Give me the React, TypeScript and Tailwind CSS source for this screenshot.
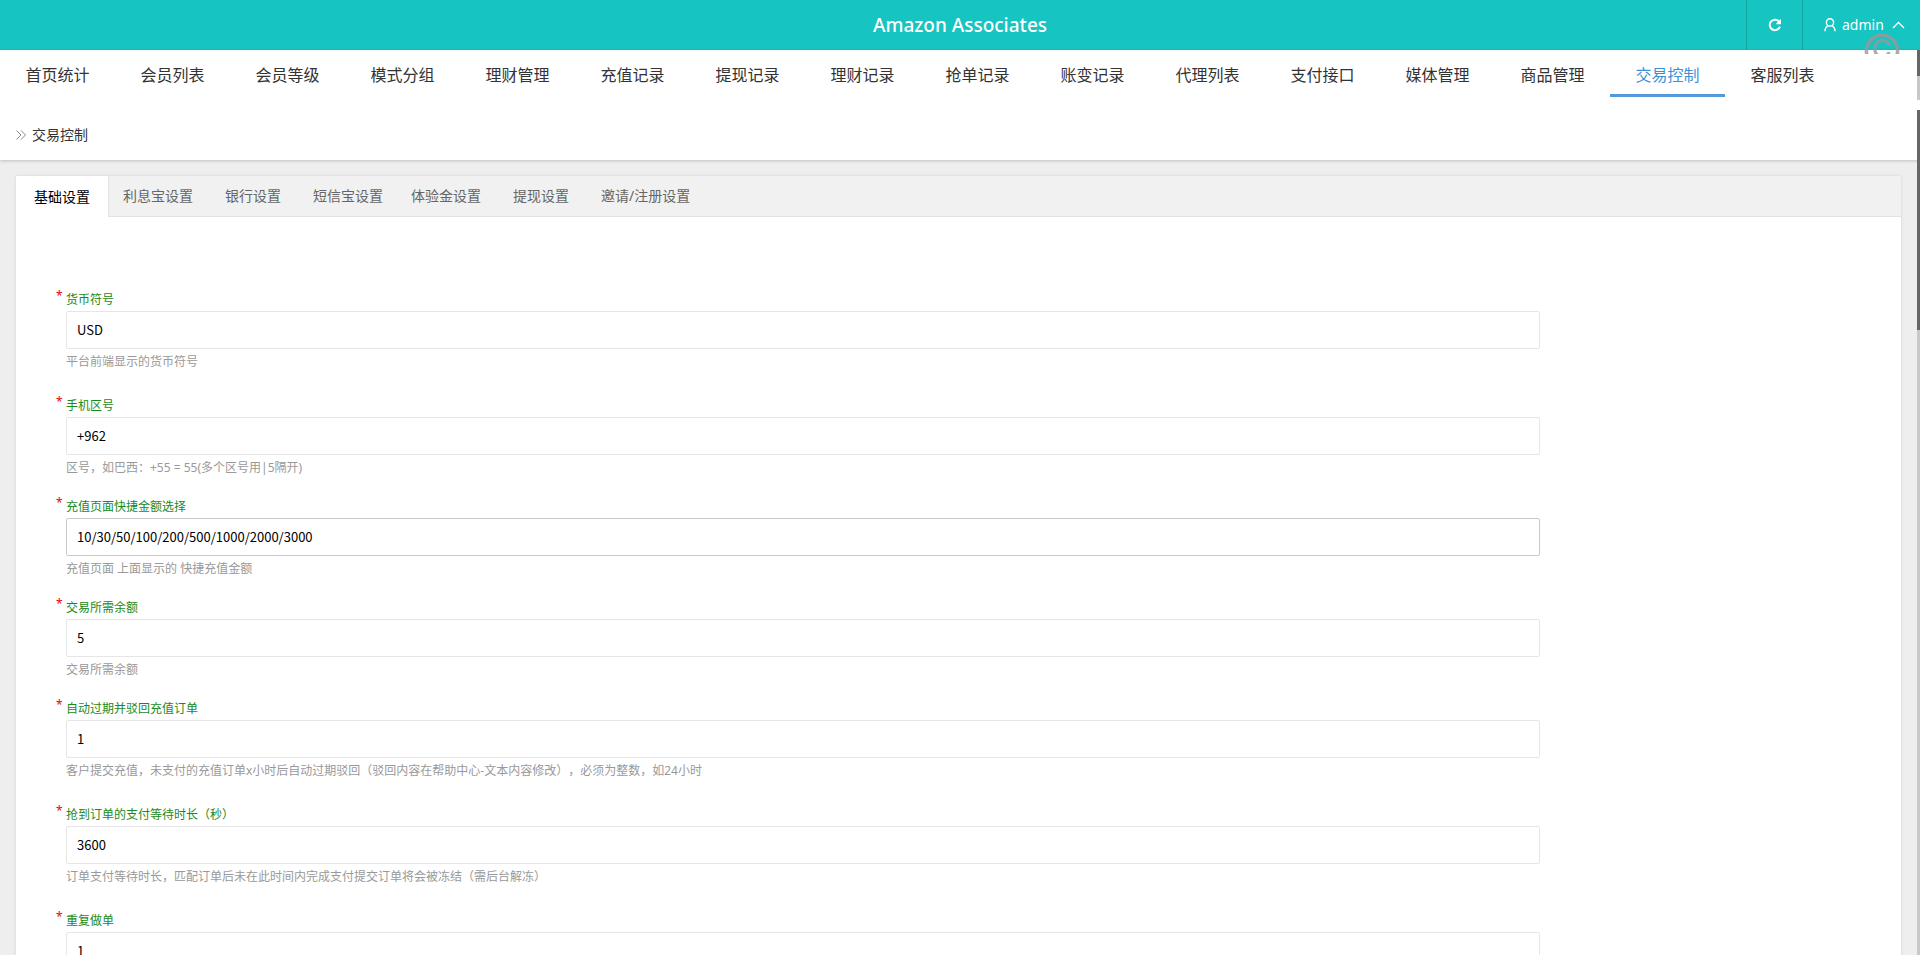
import React, { useState } from 'react';

const navItems = [
  '首页统计',
  '会员列表',
  '会员等级',
  '模式分组',
  '理财管理',
  '充值记录',
  '提现记录',
  '理财记录',
  '抢单记录',
  '账变记录',
  '代理列表',
  '支付接口',
  '媒体管理',
  '商品管理',
  '交易控制',
  '客服列表',
];

const tabs = [
  { name: '利息宝设置', spaced: false },
  { name: '银行设置', spaced: true },
  { name: '短信宝设置', spaced: true },
  { name: '体验金设置', spaced: false },
  { name: '提现设置', spaced: true },
  { name: '邀请/注册设置', spaced: true },
];

interface Field {
  id: string;
  label: string;
  value: string;
  hint: string;
  active?: boolean;
  compact?: boolean;
}

const fields: Field[] = [
  { id: 'currency', label: '货币符号', value: 'USD', hint: '平台前端显示的货币符号' },
  {
    id: 'area_code',
    label: '手机区号',
    value: '+962',
    hint: '区号，如巴西：+55 = 55(多个区号用|5隔开)',
    compact: true,
  },
  {
    id: 'recharge_options',
    label: '充值页面快捷金额选择',
    value: '10/30/50/100/200/500/1000/2000/3000',
    hint: '充值页面 上面显示的 快捷充值金额',
    active: true,
    compact: true,
  },
  { id: 'min_balance', label: '交易所需余额', value: '5', hint: '交易所需余额', compact: true },
  {
    id: 'expire_hours',
    label: '自动过期并驳回充值订单',
    value: '1',
    hint: '客户提交充值，未支付的充值订单x小时后自动过期驳回（驳回内容在帮助中心-文本内容修改），必须为整数，如24小时',
  },
  {
    id: 'pay_timeout',
    label: '抢到订单的支付等待时长（秒）',
    value: '3600',
    hint: '订单支付等待时长，匹配订单后未在此时间内完成支付提交订单将会被冻结（需后台解冻）',
  },
  { id: 'repeat_order', label: '重复做单', value: '1', hint: '' },
];

function Header() {
  return (
    <header className="relative flex h-[50px] shrink-0 items-stretch justify-end bg-[#16c4c1] text-white">
      <h1 className="pointer-events-none absolute inset-x-0 top-0 text-center text-[19px] font-medium leading-[50px]">
        Amazon Associates
      </h1>
      <button
        type="button"
        aria-label="刷新"
        className="flex w-14 items-center justify-center border-l border-[#12a3a1]"
      >
        <svg width="14" height="14" viewBox="0 0 14 14" fill="none">
          <path d="M10.8 3.4A5.2 5.2 0 1 0 11.9 8.6" stroke="currentColor" strokeWidth="2" />
          <path d="M13 0.8V6.2H7.6Z" fill="currentColor" />
        </svg>
      </button>
      <button
        type="button"
        className="flex w-[118px] items-center gap-[6px] border-l border-[#12a3a1] pl-[21px] text-sm"
      >
        <svg width="12" height="14" viewBox="0 0 12 14" fill="none" stroke="currentColor" strokeWidth="1.4">
          <circle cx="6" cy="4.4" r="3.6" />
          <path d="M4.2 7.6C2.2 8.5 1 10.4 0.9 13.3M7.8 7.6C9.8 8.5 11 10.4 11.1 13.3" />
        </svg>
        admin
        <svg className="ml-[2px]" width="13" height="8" viewBox="0 0 13 8" fill="none" stroke="currentColor" strokeWidth="1.3">
          <path d="M1 7L6.5 1.5L12 7" />
        </svg>
      </button>
      {/* copyright mark, clipped just below the header */}
      <svg
        className="absolute right-5 top-[33px] z-10"
        width="36"
        height="21"
        viewBox="0 0 36 21"
        fill="none"
        stroke="#999999"
        strokeOpacity="0.8"
      >
        <circle cx="18" cy="17.8" r="15.6" strokeWidth="3.6" />
        <path d="M25.2 12.4C24 9.2 21.6 7.4 18.4 7.4C13.6 7.4 10.8 11 10.8 15.8C10.8 20.6 13.6 23.6 18.4 23.6C21.6 23.6 24 22 25.2 19" strokeWidth="3.2" />
      </svg>
    </header>
  );
}

function FormField({ field }: { field: Field }) {
  const [value, setValue] = useState(field.value);

  return (
    <div className={field.compact ? 'mb-[15px]' : 'mb-5'}>
      <label htmlFor={field.id} className="relative block pt-[2px] text-xs leading-[22px] text-[#1a8a1a]">
        <span className="absolute -left-[10px] -top-[2px] text-red-600">*</span>
        {field.label}
      </label>
      <input
        id={field.id}
        type="text"
        value={value}
        onChange={(e) => setValue(e.target.value)}
        className={`
          block h-[38px] w-full rounded-xs border bg-white px-[10px] pb-[2px] text-[13px] text-black outline-none
          font-['Noto_Sans_CJK_SC',sans-serif]
          ${field.active ? 'border-[#c9c9c9]' : 'border-[#e6e6e6]'}
        `}
      />
      <p className="pt-[2px] text-xs leading-[22px] text-[#999999]">{field.hint}</p>
    </div>
  );
}

export default function App() {
  const [activeNav, setActiveNav] = useState('交易控制');

  return (
    <div className="relative flex h-screen flex-col overflow-hidden bg-[#eeeeee] font-['Noto_Sans','Noto_Sans_CJK_SC',sans-serif] text-[#333333] [text-spacing-trim:space-all]">
      <Header />

      <div className="z-[1] shrink-0 bg-white shadow-[0_1px_3px_rgba(0,0,0,0.2)]">
        <nav className="flex h-[47px]">
          {navItems.map((item) => (
            <a
              key={item}
              href="#"
              onClick={() => setActiveNav(item)}
              className={`
                w-[115px] border-b-[3px] pt-[13px] text-center text-base leading-6
                ${item === activeNav ? 'border-[#5599dd] text-[#3f8fd6]' : 'border-transparent'}
              `}
            >
              {item}
            </a>
          ))}
        </nav>
        <div className="flex h-[63px] items-center gap-[6px] px-4 pt-3 text-sm">
          <svg width="10" height="10" viewBox="0 0 10 10" fill="none" stroke="#888888">
            <path d="M0.5 0.5L5 5L0.5 9.5M5 0.5L9.5 5L5 9.5" />
          </svg>
          交易控制
        </div>
      </div>

      <main className="min-h-0 flex-1 overflow-hidden pl-4 pr-[19px] pt-4">
        <div className="bg-white shadow-[0_0_3px_rgba(0,0,0,0.12)]">
          <div role="tablist" className="flex h-[41px] bg-[#f1f1f1] text-sm text-[#666666]">
            <button
              type="button"
              role="tab"
              aria-selected="true"
              className="border-r border-[#e2e2e2] bg-white px-[18px] text-black"
            >
              基础设置
            </button>
            <div className="flex flex-1 border-b border-[#e2e2e2]">
              {tabs.map((tab) => (
                <button
                  key={tab.name}
                  type="button"
                  role="tab"
                  aria-selected="false"
                  className={`px-[14px] ${tab.spaced ? 'ml-1' : ''}`}
                >
                  {tab.name}
                </button>
              ))}
            </div>
          </div>

          <form className="ml-4 w-4/5 pb-10 pl-[34px] pt-[70px]">
            {fields.map((field) => (
              <FormField key={field.id} field={field} />
            ))}
          </form>
        </div>
      </main>

      {/* Scrollbars */}
      <div className="absolute right-0 top-[50px] z-10 h-[60px] w-[3px] bg-white">
        <div className="h-[26px] bg-[#666666]" />
        <div className="h-6 bg-[#c8c8c8]" />
      </div>
      <div className="absolute bottom-0 right-0 top-[110px] z-10 w-[3px] bg-[#c8c8c8]">
        <div className="h-[220px] bg-[#666666]" />
      </div>
    </div>
  );
}
